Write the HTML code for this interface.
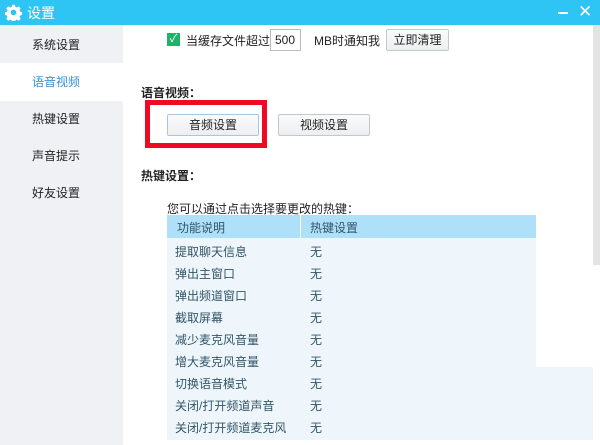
<!DOCTYPE html><html><head><meta charset="utf-8"><style>
*{margin:0;padding:0;box-sizing:border-box}
body{width:600px;height:445px;overflow:hidden;background:#fff;font-family:"Liberation Sans","Noto Sans CJK SC",sans-serif;font-size:12px;color:#222;position:relative}
.a{position:absolute}
.title{left:0;top:0;width:600px;height:25px;background:#2ec4f4;color:#fff;font-size:14px}
.side{left:0;top:25px;width:123px;height:420px;background:#eff1f4}
.si{position:absolute;left:32px;font-size:12px;color:#222}
.btn{position:absolute;border:1px solid #c4c8cc;border-radius:2px;background:linear-gradient(#fbfbfb,#eceef0);text-align:center;line-height:20px;font-size:12px}
.tbl{left:167px;top:215px;width:369px;height:152px;background:#eef6fc}
.row{position:absolute;left:175px;font-size:12px;color:#356}
</style></head><body>
<div class="a title">
<svg class="a" style="left:5px;top:4px" width="17" height="17" viewBox="0 0 24 24"><path fill="#fff" d="M10 1h4l.6 3 2.2 1 2.6-1.7 2.8 2.8-1.7 2.6 1 2.2 3 .6v4l-3 .6-1 2.2 1.7 2.6-2.8 2.8-2.6-1.7-2.2 1-.6 3h-4l-.6-3-2.2-1-2.6 1.7-2.8-2.8 1.7-2.6-1-2.2-3-.6v-4l3-.6 1-2.2-1.7-2.6 2.8-2.8 2.6 1.7 2.2-1z"/><circle cx="12" cy="12" r="4" fill="#2ec4f4"/></svg>
<span class="a" style="left:27px;top:3px">设置</span>
<div class="a" style="left:558px;top:12px;width:10px;height:2px;background:#fff"></div>
<span class="a" style="left:578px;top:2px;font-size:17px">✕</span>
</div>
<div class="a side"></div>
<div class="a" style="left:0;top:63px;width:123px;height:38px;background:#fff"></div>
<span class="si" style="top:36px">系统设置</span>
<span class="si" style="top:73px;color:#3a8fd0">语音视频</span>
<span class="si" style="top:110px">热键设置</span>
<span class="si" style="top:147px">声音提示</span>
<span class="si" style="top:184px">好友设置</span>
<div class="a" style="left:593px;top:25px;width:7px;height:240px;background:#e3e3e3"></div>
<div class="a" style="left:167px;top:33px;width:13px;height:13px;background:#1fb36a;color:#fff;font-size:11px;line-height:13px;text-align:center">✓</div>
<span class="a" style="left:186px;top:32px">当缓存文件超过</span>
<div class="a" style="left:270px;top:29px;width:31px;height:22px;border:1px solid #bbb;padding-left:4px;line-height:20px">500</div>
<span class="a" style="left:314px;top:32px">MB时通知我</span>
<div class="btn" style="left:386px;top:29px;width:63px;height:22px">立即清理</div>
<span class="a" style="left:141px;top:84px;font-weight:bold">语音视频：</span>
<div class="a" style="left:145px;top:100px;width:122px;height:48px;border:5px solid #ee0a22"></div>
<div class="btn" style="left:167px;top:114px;width:92px;height:22px;border-color:#a9c6de">音频设置</div>
<div class="btn" style="left:278px;top:114px;width:92px;height:22px">视频设置</div>
<span class="a" style="left:141px;top:167px;font-weight:bold">热键设置：</span>
<span class="a" style="left:167px;top:200px">您可以通过点击选择要更改的热键：</span>
<div class="a tbl"></div>
<div class="a" style="left:167px;top:367px;width:426px;height:73px;background:#eef6fc"></div>
<div class="a" style="left:167px;top:215px;width:369px;height:23px;background:#aee0fa"></div>
<div class="a" style="left:300px;top:215px;width:1px;height:23px;background:#fff"></div>
<span class="row" style="top:219px;left:177px">功能说明</span><span class="row" style="top:219px;left:310px">热键设置</span>
<span class="row" style="top:243px">提取聊天信息</span><span class="row" style="top:243px;left:310px">无</span>
<span class="row" style="top:265px">弹出主窗口</span><span class="row" style="top:265px;left:310px">无</span>
<span class="row" style="top:287px">弹出频道窗口</span><span class="row" style="top:287px;left:310px">无</span>
<span class="row" style="top:309px">截取屏幕</span><span class="row" style="top:309px;left:310px">无</span>
<span class="row" style="top:331px">减少麦克风音量</span><span class="row" style="top:331px;left:310px">无</span>
<span class="row" style="top:353px">增大麦克风音量</span><span class="row" style="top:353px;left:310px">无</span>
<span class="row" style="top:375px">切换语音模式</span><span class="row" style="top:375px;left:310px">无</span>
<span class="row" style="top:397px">关闭/打开频道声音</span><span class="row" style="top:397px;left:310px">无</span>
<span class="row" style="top:419px">关闭/打开频道麦克风</span><span class="row" style="top:419px;left:310px">无</span>
</body></html>
